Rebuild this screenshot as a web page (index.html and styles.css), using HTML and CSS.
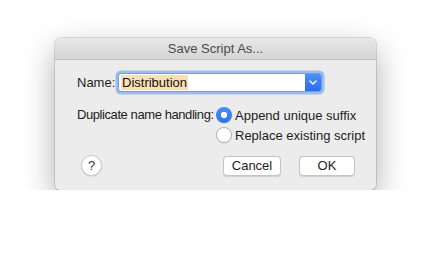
FILE: index.html
```html
<!DOCTYPE html>
<html lang="en">
<head>
    <meta charset="UTF-8">
    <title>Save Script As...</title>
    <link rel="stylesheet" href="styles.css">
</head>
<body>
    <div class="dialog">
        <div class="title-bar">Save Script As...</div>

        <div class="dialog-body">
            <div class="name-row">
                <label class="name-label">Name:</label>
                <div class="combo">
                    <div class="combo-field"><span class="selected">Distribution</span></div>
                    <div class="combo-arrow">
                        <svg width="8" height="5" viewBox="0 0 8 5"><path d="M1 1 L4 4 L7 1" fill="none" stroke="#fff" stroke-width="1.4" stroke-linecap="round" stroke-linejoin="round"/></svg>
                    </div>
                </div>
            </div>

            <div class="dup-row">
                <div class="dup-label">Duplicate name handling:</div>
                <div class="radio-group">
                    <div class="radio-item">
                        <span class="radio checked"></span>
                        <span>Append unique suffix</span>
                    </div>
                    <div class="radio-item">
                        <span class="radio"></span>
                        <span>Replace existing script</span>
                    </div>
                </div>
            </div>

            <div class="button-row">
                <div class="help">?</div>
                <div class="buttons">
                    <button class="btn cancel">Cancel</button>
                    <button class="btn ok">OK</button>
                </div>
            </div>
        </div>
    </div>
</body>
</html>
```

FILE: styles.css
```css
body {
    margin: 0;
    padding: 38px 0 0 55px;
    background-color: #fff;
    font-family: "Liberation Sans", Arial, sans-serif;
    font-size: 13px;
    color: #1d1d1d;
}
.dialog {
    width: 321px;
    height: 152px;
    background: #ececec;
    border-radius: 5px;
    box-shadow: 0 0 0 0.5px rgba(0, 0, 0, 0.25), 0 12px 32px rgba(0, 0, 0, 0.32);
    overflow: hidden;
    white-space: nowrap;
}
.title-bar {
    height: 21px;
    line-height: 22px;
    text-align: center;
    color: #4b4b4b;
    background: linear-gradient(#e8e8e8, #d5d5d5);
    border-bottom: 1px solid #bcbcbc;
}
.dialog-body {
    padding: 13px 21px 14px 22px;
}
.name-row {
    display: flex;
    align-items: center;
    height: 19px;
}
.name-label {
    width: 41px;
    flex-shrink: 0;
}
.combo {
    display: flex;
    width: 204px;
    height: 19px;
    border: 1px solid #6c9ee6;
    box-sizing: border-box;
    border-radius: 3px;
    box-shadow: 0 0 0 2.5px rgba(94, 149, 235, 0.55);
    background: #fff;
    overflow: hidden;
}
.combo-field {
    flex: 1;
    padding-left: 2px;
    display: flex;
    align-items: center;
}
.selected {
    background: #fbdfb3;
    color: #111;
    line-height: 15px;
    padding: 0 1px;
}
.combo-arrow {
    width: 16px;
    background: linear-gradient(#4c91f7, #2a6ef0);
    display: flex;
    align-items: center;
    justify-content: center;
}
.dup-row {
    display: flex;
    margin-top: 15px;
}
.dup-label {
    width: 139px;
    flex-shrink: 0;
    line-height: 16px;
    letter-spacing: -0.42px;
}
.radio-group {
    display: flex;
    flex-direction: column;
    gap: 4px;
}
.radio-item {
    display: flex;
    align-items: center;
    gap: 3px;
    height: 16px;
}
.radio {
    width: 16px;
    height: 16px;
    flex-shrink: 0;
    box-sizing: border-box;
    border-radius: 50%;
    background: #fff;
    border: 1px solid #b5b5b5;
    box-shadow: 0 0.5px 1px rgba(0, 0, 0, 0.1);
}
.radio.checked {
    border: none;
    background: radial-gradient(circle, #fff 0 3px, transparent 3.5px), linear-gradient(#4a8ff8, #2c72ee);
}
.button-row {
    display: flex;
    align-items: center;
    margin-top: 12px;
    height: 21px;
}
.help {
    width: 21px;
    height: 21px;
    box-sizing: border-box;
    margin-left: 4px;
    border-radius: 50%;
    background: #fff;
    border: 1px solid #c8c8c8;
    box-shadow: 0 0.5px 1px rgba(0, 0, 0, 0.15);
    text-align: center;
    line-height: 19px;
    color: #333;
}
.buttons {
    display: flex;
    gap: 18px;
    margin-left: auto;
}
.btn {
    height: 20px;
    padding: 0;
    font-family: "Liberation Sans", Arial, sans-serif;
    font-size: 13px;
    color: #1d1d1d;
    background: #fff;
    border: 1px solid #c5c5c5;
    border-radius: 4px;
    box-shadow: 0 0.5px 1px rgba(0, 0, 0, 0.12);
}
.cancel {
    width: 58px;
}
.ok {
    width: 56px;
}
```
